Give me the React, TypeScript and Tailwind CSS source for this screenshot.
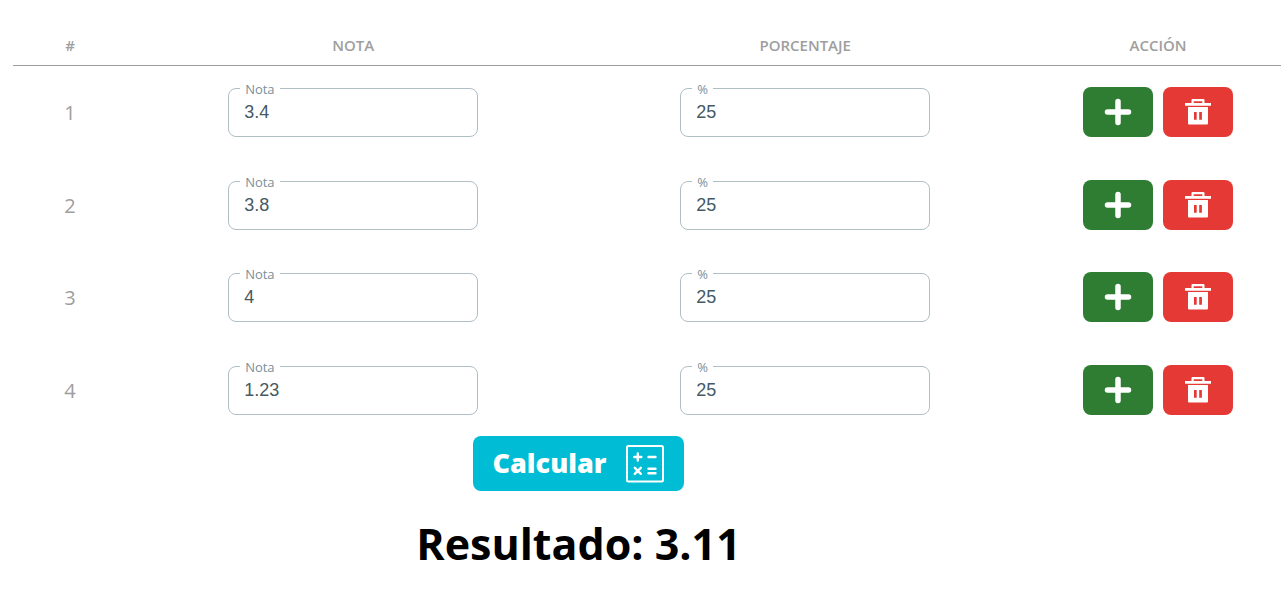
import { useState } from "react";

type Row = { id: number; nota: string; porcentaje: string };

const initialRows: Row[] = [
  { id: 1, nota: "3.4", porcentaje: "25" },
  { id: 2, nota: "3.8", porcentaje: "25" },
  { id: 3, nota: "4", porcentaje: "25" },
  { id: 4, nota: "1.23", porcentaje: "25" },
];

function PlusIcon() {
  return (
    <svg width="28" height="28" viewBox="0 0 28 28" fill="none" stroke="currentColor" strokeWidth="5.5" strokeLinecap="round" aria-hidden="true">
      <path d="M14 3.5v21M3.5 14h21" />
    </svg>
  );
}

function TrashIcon() {
  return (
    <svg width="28" height="28" viewBox="0 0 28 28" fill="currentColor" fillRule="evenodd" aria-hidden="true">
      <path d="M7.500 2q0-1 1-1h11q1 0 1 1v3H27v2.700H1V5h6.500zM9.700 3.200V5h8.600V3.200z" />
      <path d="M4 9h20v16.500q0 1-1 1H5q-1 0-1-1zM10 14v7.700h2.700V14zM15.200 14v7.700h2.700V14z" />
    </svg>
  );
}

function MathIcon() {
  return (
    <svg width="38" height="38" viewBox="0 0 38 38" fill="none" stroke="currentColor" strokeWidth="2.4" strokeLinecap="round" aria-hidden="true">
      <rect x="1" y="1" width="36" height="35.500" rx="1.5" strokeWidth="2" />
      <path d="M8.300 12h7M11.800 8.500v7M22.500 12h7M8.800 22.800l6 6M14.800 22.800l-6 6M22.500 23.700h7M22.500 28.200h7" />
    </svg>
  );
}

function Field({ id, label, value, onChange }: { id: string; label: string; value: string; onChange: (v: string) => void }) {
  return (
    <div className="relative mx-auto h-[50px] w-[250px] pt-px">
      <input
        id={id}
        value={value}
        onChange={(e) => onChange(e.target.value)}
        className="h-full w-full rounded-[8px] border border-[#b0bec5] bg-white px-[15px] font-['Liberation_Sans',sans-serif] text-[18px] text-[#455a64] outline-none focus:border-[#607d8b]"
      />
      <label htmlFor={id} className="absolute top-[-7px] left-3 bg-white px-[5px] text-[13px] leading-[18px] text-[#78909c]">
        {label}
      </label>
    </div>
  );
}

export default function App() {
  const [rows, setRows] = useState<Row[]>(initialRows);
  const [result, setResult] = useState("3.11");

  const update = (id: number, patch: Partial<Row>) =>
    setRows((all) => all.map((r) => (r.id === id ? { ...r, ...patch } : r)));
  const add = () =>
    setRows((all) => [...all, { id: Math.max(...all.map((r) => r.id)) + 1, nota: "", porcentaje: "" }]);
  const remove = (id: number) => setRows((all) => (all.length > 1 ? all.filter((r) => r.id !== id) : all));
  const calculate = () =>
    setResult(rows.reduce((sum, r) => sum + (Number(r.nota) * Number(r.porcentaje)) / 100, 0).toFixed(2));

  return (
    <main className="bg-white pt-[25px] pl-[13px] font-['Open_Sans','Noto_Sans',sans-serif]">
      <table className="w-full table-fixed border-collapse text-center text-[#9e9e9e]">
        <thead>
          <tr className="h-[40px] border-b border-[#9e9e9e] text-[15px] uppercase">
            <th scope="col" className="w-[9%] font-semibold">#</th>
            <th scope="col" className="w-[35.65%] font-semibold">Nota</th>
            <th scope="col" className="w-[35.65%] font-semibold">Porcentaje</th>
            <th scope="col" className="pl-1 font-semibold">Acción</th>
          </tr>
        </thead>
        <tbody>
          {rows.map((row, i) => (
            <tr key={row.id} className="odd:h-[92px] even:h-[93px]">
              <td className="pt-1 text-[20px]">{i + 1}</td>
              <td className="pt-[2px]">
                <Field id={`nota-${row.id}`} label="Nota" value={row.nota} onChange={(nota) => update(row.id, { nota })} />
              </td>
              <td className="pt-[2px]">
                <Field id={`porcentaje-${row.id}`} label="%" value={row.porcentaje} onChange={(porcentaje) => update(row.id, { porcentaje })} />
              </td>
              <td className="pt-[2px] pl-1">
                <div className="flex justify-center gap-[10px] text-white">
                  <button type="button" aria-label="Agregar" onClick={add} className="flex h-[50px] w-[70px] items-center justify-center rounded-[8px] bg-[#2e7d32]">
                    <PlusIcon />
                  </button>
                  <button type="button" aria-label="Eliminar" onClick={() => remove(row.id)} className="flex h-[50px] w-[70px] items-center justify-center rounded-[8px] bg-[#e53935]">
                    <TrashIcon />
                  </button>
                </div>
              </td>
            </tr>
          ))}
        </tbody>
      </table>
      <section className="flex flex-col items-center pt-px pr-[137px]">
        <button type="button" onClick={calculate} className="flex h-[55px] items-center gap-5 rounded-[8px] bg-[#00bcd4] px-5 text-[27px] font-extrabold text-white">
          Calcular
          <MathIcon />
        </button>
        <h1 className="mt-[23px] text-[43px] leading-[60px] font-bold text-black">Resultado: {result}</h1>
      </section>
    </main>
  );
}
